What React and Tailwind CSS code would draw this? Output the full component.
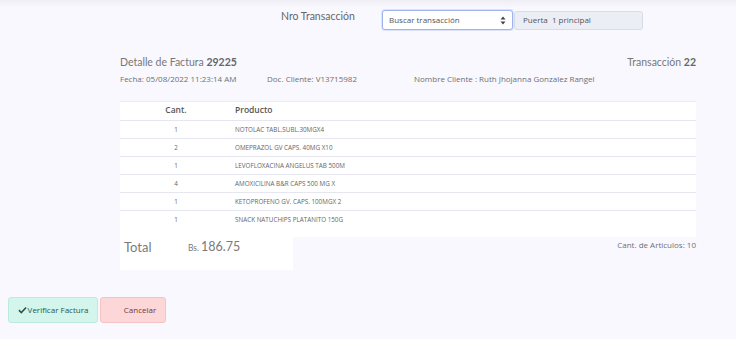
import React from 'react';

const items = [
  { qty: 1, name: 'NOTOLAC TABL.SUBL.30MGX4' },
  { qty: 2, name: 'OMEPRAZOL GV CAPS. 40MG X10' },
  { qty: 1, name: 'LEVOFLOXACINA ANGELUS TAB 500M' },
  { qty: 4, name: 'AMOXICILINA B&R CAPS 500 MG X' },
  { qty: 1, name: 'KETOPROFENO GV. CAPS. 100MGX 2' },
  { qty: 1, name: 'SNACK NATUCHIPS PLATANITO 150G' },
];

const open = { fontFamily: '"Open Sans", "Noto Sans", sans-serif' };

const App = () => {
  return (
    <div
      className="w-[736px] h-[339px] bg-[#f9f8fe] text-[#6f6f6f] overflow-hidden"
      style={{ fontFamily: 'Lato, "Open Sans", sans-serif' }}
    >
      <div className="h-[8px] bg-gradient-to-b from-[#efeef4] to-[#f9f8fe]" />

      {/* search bar */}
      <div className="flex items-center h-[22px] mt-[1px]">
        <div className="ml-[281px] w-[101px] text-[10.5px] text-[#666] -mt-[6px]">Nro Transacción</div>
        <div className="flex items-center w-[131px] h-[20px] bg-white border border-[#9fb3ee] rounded-[3px] shadow-[0_0_0_1px_#dbe3fb] pl-[6px] pr-[6px]">
          <span className="text-[8px] text-[#555] flex-1" style={open}>Buscar transacción</span>
          <svg width="6" height="9" viewBox="0 0 6 9" className="text-[#444]">
            <path d="M3 0.5 L5.5 3.5 H0.5 Z M3 8.5 L5.5 5.5 H0.5 Z" fill="currentColor" />
          </svg>
        </div>
        <div className="ml-[1px] w-[129px] h-[19px] bg-[#eceef6] border border-[#d9dce6] rounded-[3px] flex items-center pl-[8px] text-[8px] text-[#555]" style={open}>
          Puerta&nbsp; 1 principal
        </div>
      </div>

      {/* header */}
      <div className="mx-[40px] pl-[80px] mt-[24px]">
        <div className="flex justify-between items-baseline">
          <div className="text-[10.5px] text-[#777]">
            Detalle de Factura <span className="font-bold text-[#666]">29225</span>
          </div>
          <div className="text-[10.5px] text-[#777]">
            Transacción <span className="font-bold text-[#666]">22</span>
          </div>
        </div>
        <div className="flex text-[8px] text-[#6f6f6f] mt-[2px]" style={open}>
          <div className="w-[147px]">Fecha: 05/08/2022 11:23:14 AM</div>
          <div className="w-[147px]">Doc. Cliente: V13715982</div>
          <div>Nombre Cliente : Ruth Jhojanna Gonzalez Rangel</div>
        </div>

        {/* table */}
        <div className="mt-[16px] bg-white border-t border-[#ecebf5]" style={open}>
          <div className="flex h-[19px] items-center text-[8.5px] font-semibold text-[#555] border-b border-[#e6e6f0]">
            <div className="w-[112px] text-center">Cant.</div>
            <div className="pl-[3px]">Producto</div>
          </div>
          {items.map((it, i) => (
            <div
              key={i}
              className={`flex h-[18px] items-center text-[6.3px] text-[#666] ${i < items.length - 1 ? 'border-b border-[#e6e6f0]' : ''}`}
            >
              <div className="w-[112px] text-center">{it.qty}</div>
              <div className="pl-[3px]">{it.name}</div>
            </div>
          ))}
          <div className="h-[8px]" />
        </div>

        {/* totals */}
        <div className="flex justify-between">
          <div className="w-[173px] h-[33px] bg-white flex items-start pt-[1px] pl-[4px]">
            <span className="text-[13px] text-[#7a7a7a] w-[64px]">Total</span>
            <span className="text-[8.5px] text-[#7a7a7a] mt-[4px] mr-[2px]">Bs.</span>
            <span className="text-[12.5px] text-[#7a7a7a]">186.75</span>
          </div>
          <div className="text-[8px] text-[#6f6f6f] mt-[2px]" style={open}>Cant. de Articulos: 10</div>
        </div>
      </div>

      {/* buttons */}
      <div className="flex ml-[8px] mt-[27px] gap-[2px]" style={open}>
        <button className="w-[90px] h-[26px] bg-[#d3f5eb] border border-[#bdeadc] rounded-[3px] text-[8px] text-[#2c5548] flex items-center justify-center">
          <svg width="9" height="8" viewBox="0 0 10 8" className="mr-[1px]">
            <path d="M1 4.2 L3.7 6.8 L9 1.2" stroke="#2c5548" strokeWidth="1.8" fill="none" />
          </svg>
          Verificar Factura
        </button>
        <button className="w-[66px] h-[26px] bg-[#fdd7d7] border border-[#f6c2c2] rounded-[3px] text-[8px] text-[#6b3a3a] flex items-center justify-center pl-[14px]">
          Cancelar
        </button>
      </div>
    </div>
  );
};

export default App;
